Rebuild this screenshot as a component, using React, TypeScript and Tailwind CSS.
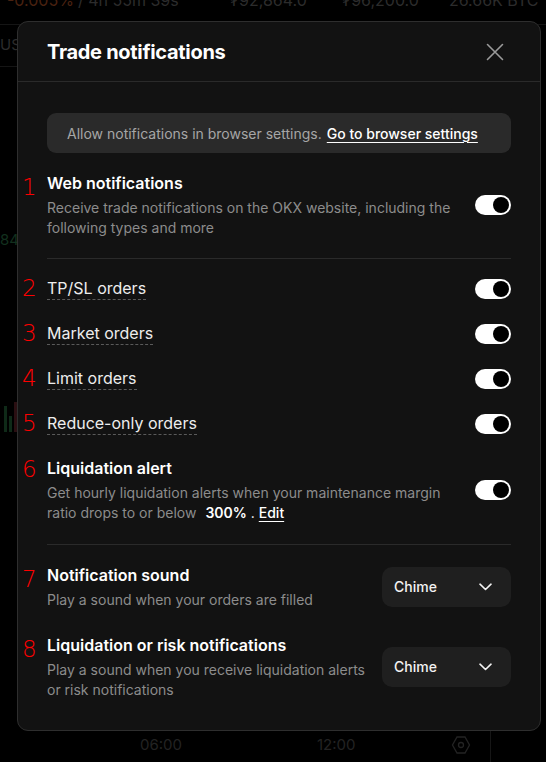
import React from "react";

function Toggle() {
  return (
    <div className="flex h-[20px] w-[36px] shrink-0 items-center justify-end rounded-full bg-white pr-[2px]">
      <div className="h-[16px] w-[16px] rounded-full bg-black" />
    </div>
  );
}

function Num({ n, top }: { n: string; top: string }) {
  return (
    <span
      className={`absolute left-[-25px] ${top} font-['DejaVu_Sans',sans-serif] text-[23px] font-extralight leading-none text-[#ff0000]`}
    >
      {n}
    </span>
  );
}

function Select() {
  return (
    <div className="flex h-[40px] w-[129px] shrink-0 items-center justify-between rounded-[10px] bg-[#1f1f1f] pl-[12px] pr-[19px]">
      <span className="text-[14px] font-medium text-[#f2f2f2]">Chime</span>
      <svg width="13" height="8" viewBox="0 0 13 8" fill="none">
        <path d="M1 1.2l5.5 5.3L12 1.2" stroke="#f2f2f2" strokeWidth="1.6" strokeLinecap="round" strokeLinejoin="round" />
      </svg>
    </div>
  );
}

const orders = [
  { n: "2", label: "TP/SL orders" },
  { n: "3", label: "Market orders" },
  { n: "4", label: "Limit orders" },
  { n: "5", label: "Reduce-only orders" },
];

export default function App() {
  return (
    <div className="relative h-[762px] w-[546px] overflow-hidden bg-black font-['Inter',sans-serif]">
      {/* backdrop */}
      <div className="flex h-full flex-col">
        <div className="h-[25px] overflow-hidden border-b border-[#151515]">
          <div className="-mt-[10px] flex h-[20px] items-center whitespace-nowrap text-[16px] text-[#2c2c2c]">
            <span className="ml-[7px] text-[#4a2210]">-0.005%</span>
            <span className="ml-[4px]">/ 4h 55m 39s</span>
            <span className="ml-[50px]">₮92,864.0</span>
            <span className="ml-[34px]">₮96,200.0</span>
            <span className="ml-[30px]">26.66K BTC</span>
            <span className="ml-[42px]">98</span>
          </div>
        </div>
        <div className="flex flex-1 flex-col">
          <div className="flex h-[42px] w-[17px] items-center overflow-hidden border-b border-[#151515] text-[15px] text-[#2c2c2c]">
            USD
          </div>
          <div className="mt-[162px] w-[17px] overflow-hidden text-[15px] text-[#12301e]">84</div>
          <div className="mt-[150px] flex w-[17px] items-end gap-[2px] pl-[4px]">
            <div className="h-[26px] w-[3px] bg-[#0f2a18]" />
            <div className="h-[16px] w-[3px] bg-[#0f2a18]" />
            <div className="h-[30px] w-[3px] bg-[#2a0f12]" />
          </div>
        </div>
        <div className="flex h-[34px] items-center text-[15px] text-[#232323]">
          <span className="ml-[140px]">06:00</span>
          <span className="ml-[135px]">12:00</span>
          <svg className="ml-[95px]" width="20" height="20" viewBox="0 0 20 20" fill="none">
            <path d="M6 2h8l4.5 8L14 18H6L1.5 10z" stroke="#232323" strokeWidth="1.3" />
            <circle cx="10" cy="10" r="2.5" stroke="#232323" strokeWidth="1.3" />
          </svg>
          <div className="ml-[19px] h-full w-px bg-[#161616]" />
        </div>
      </div>

      {/* modal */}
      <div className="absolute left-[17px] top-[21px] flex h-[710px] w-[524px] flex-col rounded-[11px] border border-[#2e2e2e] bg-[#121212]">
        <div className="flex h-[60px] shrink-0 items-center justify-between border-b border-[#2a2a2a] pl-[29px] pr-[36px]">
          <h1 className="text-[20px] font-bold tracking-[-0.3px] text-white">Trade notifications</h1>
          <svg width="18" height="18" viewBox="0 0 18 18" fill="none">
            <path d="M1.5 1.5l15 15M16.5 1.5l-15 15" stroke="#9a9a9a" strokeWidth="1.6" strokeLinecap="round" />
          </svg>
        </div>

        <div className="flex flex-col px-[29px] pt-[31px]">
          <div className="flex h-[40px] items-center rounded-[9px] bg-[#2a2a2a] pl-[20px] text-[14px]">
            <span className="text-[#a6a6a6]">Allow notifications in browser settings.</span>
            <span className="ml-[5px] font-medium text-white underline decoration-1 underline-offset-[3px]">
              Go to browser settings
            </span>
          </div>

          {/* web notifications */}
          <div className="relative mt-[18px] flex items-center justify-between">
            <Num n="1" top="top-[5px]" />
            <div className="flex flex-col">
              <div className="text-[16px] font-semibold leading-[24px] text-white">Web notifications</div>
              <div className="mt-[3px] text-[14px] leading-[20px] text-[#8c8c8c]">
                Receive trade notifications on the OKX website, including the
                <br />
                following types and more
              </div>
            </div>
            <Toggle />
          </div>

          <div className="mt-[20px] h-px bg-[#2a2a2a]" />

          <div className="flex flex-col pt-[7px]">
            {orders.map((o) => (
              <div key={o.n} className="relative flex h-[45px] items-center justify-between">
                <Num n={o.n} top="top-[11px]" />
                <span className="border-b border-dashed border-[#5a5a5a] text-[16px] leading-[21px] text-[#ededed]">
                  {o.label}
                </span>
                <Toggle />
              </div>
            ))}
          </div>

          {/* liquidation alert */}
          <div className="relative mt-[10px] flex items-center justify-between">
            <Num n="6" top="top-[2px]" />
            <div className="flex flex-col">
              <div className="text-[16px] font-semibold leading-[24px] text-white">Liquidation alert</div>
              <div className="mt-[3px] text-[14px] leading-[20px] text-[#8c8c8c]">
                Get hourly liquidation alerts when your maintenance margin
                <br />
                ratio drops to or below <span className="ml-[5px] font-semibold text-white">300%</span>
                <span className="text-white"> . </span>
                <span className="font-medium text-white underline decoration-1 underline-offset-[3px]">Edit</span>
              </div>
            </div>
            <Toggle />
          </div>

          <div className="mt-[21px] h-px bg-[#2a2a2a]" />

          {/* notification sound */}
          <div className="relative mt-[18px] flex items-center justify-between">
            <Num n="7" top="top-[5px]" />
            <div className="flex flex-col">
              <div className="text-[16px] font-semibold leading-[24px] text-white">Notification sound</div>
              <div className="mt-[3px] text-[14px] leading-[20px] text-[#8c8c8c]">
                Play a sound when your orders are filled
              </div>
            </div>
            <Select />
          </div>

          <div className="relative mt-[23px] flex items-center justify-between">
            <Num n="8" top="top-[5px]" />
            <div className="flex flex-col">
              <div className="text-[16px] font-semibold leading-[24px] text-white">
                Liquidation or risk notifications
              </div>
              <div className="mt-[3px] text-[14px] leading-[20px] text-[#8c8c8c]">
                Play a sound when you receive liquidation alerts
                <br />
                or risk notifications
              </div>
            </div>
            <Select />
          </div>
        </div>
      </div>
    </div>
  );
}
